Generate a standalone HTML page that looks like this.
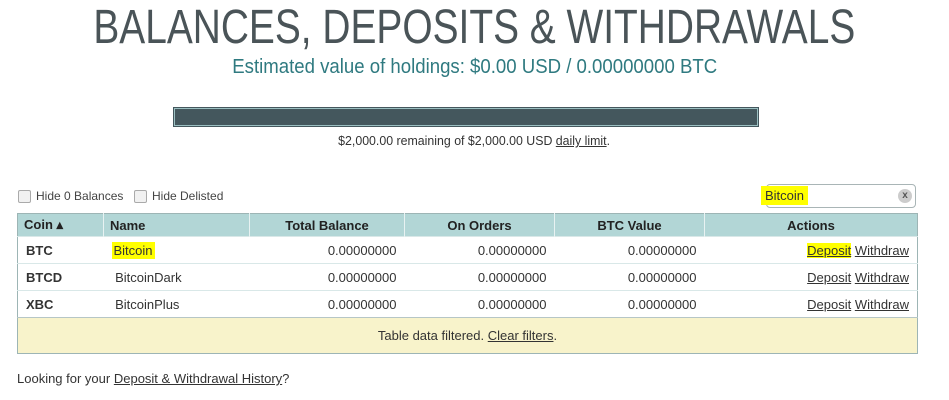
<!DOCTYPE html>
<html><head><style>
body{margin:0;background:#fff;font-family:"Liberation Sans",sans-serif;color:#333;width:949px;height:400px;overflow:hidden;position:relative}
.abs{position:absolute}
h1{position:absolute;left:0;width:949px;top:2px;margin:0;text-align:center;font-weight:300;font-size:48px;line-height:52px;color:#4a5458;letter-spacing:0}
h1 span{display:inline-block;transform:scaleX(0.81);transform-origin:center}
.est{top:56px;left:0;width:949px;text-align:center;font-size:20px;color:#2f7a80}
.est span{display:inline-block;transform:scaleX(0.93)}
.bar{left:174px;top:108px;width:582px;height:16px;background:#44575d;border:1px solid #9bbfc1;outline:1px solid #44575d}
.rem{top:133px;left:0;width:949px;text-align:center;font-size:13px;color:#333}
.rem span{display:inline-block;transform:scaleX(0.95)}
a{color:#333;text-decoration:underline}
.cb{top:189px;font-size:12px;color:#444;display:flex;align-items:center}
.cb i{display:inline-block;width:11px;height:11px;border:1px solid #aaa;border-radius:2px;background:#f1f1f1;margin-right:5px}
.search{left:766px;top:184px;width:148px;height:22px;border:1px solid #a9b5b6;border-radius:4px}
.hl{background:#ffff00}
table{position:absolute;left:17px;top:213px;width:901px;border-collapse:collapse;font-size:13px;border:1px solid #9db5b5}
th{background:#b2d6d6;height:22px;font-weight:bold;color:#222;border-left:1px solid #e8f2f2;padding:0 6px;text-align:center}
td{height:26px;border-top:1px solid #d9e8e8;padding:0 8px}
td.r{text-align:right}
.f td{background:#f8f3cb;height:35px;text-align:center;border-top:1px solid #b6c6c6}
</style></head><body>
<h1><span>BALANCES, DEPOSITS &amp; WITHDRAWALS</span></h1>
<div class="abs est"><span>Estimated value of holdings: $0.00 USD / 0.00000000 BTC</span></div>
<div class="abs bar"></div>
<div class="abs rem"><span>$2,000.00 remaining of $2,000.00 USD <a>daily limit</a>.</span></div>
<div class="abs cb" style="left:18px"><i></i>Hide 0 Balances</div>
<div class="abs cb" style="left:134px"><i></i>Hide Delisted</div>
<div class="abs search"><span class="abs hl" style="left:-6px;top:1px;padding:2px 4px;font-size:13px">Bitcoin</span><span class="abs" style="right:3px;top:4px;width:14px;height:14px;border-radius:7px;background:#ccc;font-size:10px;text-align:center;line-height:13px;color:#555;font-weight:bold">x</span></div>
<table>
<tr><th style="width:73px;text-align:left;border-left:0">Coin ▴</th><th style="width:133px;text-align:left">Name</th><th style="width:142px">Total Balance</th><th style="width:137px">On Orders</th><th style="width:137px">BTC Value</th><th>Actions</th></tr>
<tr><td><b>BTC</b></td><td><span class="hl" style="padding:1px 2px">Bitcoin</span></td><td class="r">0.00000000</td><td class="r">0.00000000</td><td class="r">0.00000000</td><td class="r"><a class="hl">Deposit</a> <a>Withdraw</a></td></tr>
<tr><td><b>BTCD</b></td><td>&nbsp;BitcoinDark</td><td class="r">0.00000000</td><td class="r">0.00000000</td><td class="r">0.00000000</td><td class="r"><a>Deposit</a> <a>Withdraw</a></td></tr>
<tr><td><b>XBC</b></td><td>&nbsp;BitcoinPlus</td><td class="r">0.00000000</td><td class="r">0.00000000</td><td class="r">0.00000000</td><td class="r"><a>Deposit</a> <a>Withdraw</a></td></tr>
<tr class="f"><td colspan="6">Table data filtered. <a>Clear filters</a>.</td></tr>
</table>
<div class="abs" style="left:17px;top:371px;font-size:13px">Looking for your <a>Deposit &amp; Withdrawal History</a>?</div>
</body></html>
